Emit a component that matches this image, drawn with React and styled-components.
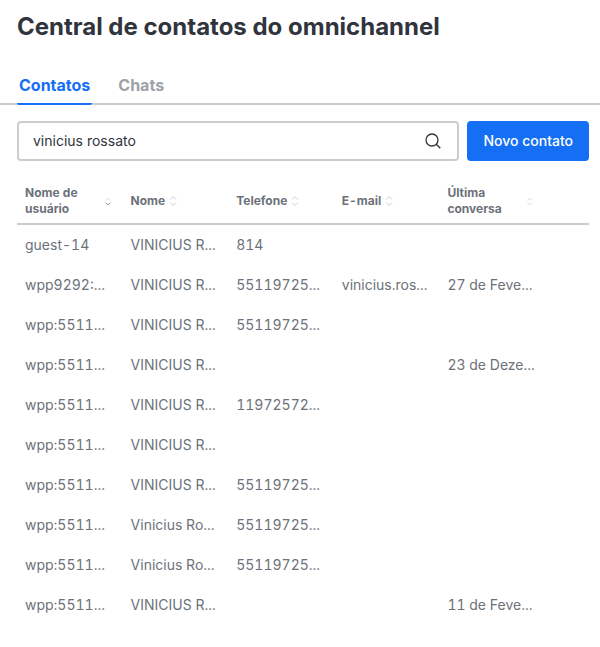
import React, { useState } from "react";
import styled, { createGlobalStyle } from "styled-components";

const columns = [
  { id: "username", label: "Nome de usuário", sorted: true, wide: true },
  { id: "name", label: "Nome" },
  { id: "phone", label: "Telefone" },
  { id: "email", label: "E-mail" },
  { id: "lastChat", label: "Última conversa", wide: true },
];

const contacts = [
  { username: "guest-14", name: "VINICIUS R...", phone: "814" },
  { username: "wpp9292:...", name: "VINICIUS R...", phone: "55119725...", email: "vinicius.ros...", lastChat: "27 de Feve..." },
  { username: "wpp:5511...", name: "VINICIUS R...", phone: "55119725..." },
  { username: "wpp:5511...", name: "VINICIUS R...", lastChat: "23 de Deze..." },
  { username: "wpp:5511...", name: "VINICIUS R...", phone: "11972572..." },
  { username: "wpp:5511...", name: "VINICIUS R..." },
  { username: "wpp:5511...", name: "VINICIUS R...", phone: "55119725..." },
  { username: "wpp:5511...", name: "Vinicius Ro...", phone: "55119725..." },
  { username: "wpp:5511...", name: "Vinicius Ro...", phone: "55119725..." },
  { username: "wpp:5511...", name: "VINICIUS R...", lastChat: "11 de Feve..." },
];

const SortIcon = ({ sorted, small }) => (
  <SortSvg viewBox="0 0 8 12" $small={small} aria-hidden="true">
    <path d="M1 4.5 L4 1.5 L7 4.5" stroke="#cbced1" />
    <path d="M1 7.5 L4 10.5 L7 7.5" stroke={sorted ? "#6c727a" : "#cbced1"} />
  </SortSvg>
);

const App = () => {
  const [search, setSearch] = useState("vinicius rossato");
  const [tab, setTab] = useState("contacts");

  return (
    <>
      <GlobalStyle />
      <Page>
        <Title>Central de contatos do omnichannel</Title>
        <Tabs role="tablist">
          <Tab role="tab" aria-selected={tab === "contacts"} $active={tab === "contacts"} onClick={() => setTab("contacts")}>
            Contatos
          </Tab>
          <Tab role="tab" aria-selected={tab === "chats"} $active={tab === "chats"} onClick={() => setTab("chats")}>
            Chats
          </Tab>
        </Tabs>
        <Content>
          <Toolbar>
            <SearchBox>
              <SearchInput
                type="text"
                aria-label="Buscar contatos"
                value={search}
                onChange={(e) => setSearch(e.target.value)}
              />
              <SearchIcon viewBox="0 0 20 20" aria-hidden="true">
                <circle cx="9" cy="9" r="6" />
                <path d="M13.3 13.3 L17.3 17.3" />
              </SearchIcon>
            </SearchBox>
            <NewButton type="button">Novo contato</NewButton>
          </Toolbar>
          <Table>
            <colgroup>
              {columns.map((c) => (
                <col key={c.id} />
              ))}
              <ActionCol />
            </colgroup>
            <thead>
              <tr>
                {columns.map((c) => (
                  <HeadCell key={c.id} scope="col">
                    <HeadContent>
                      <HeadLabel $wide={c.wide}>{c.label}</HeadLabel>
                      <SortIcon sorted={c.sorted} small={c.wide} />
                    </HeadContent>
                  </HeadCell>
                ))}
                <HeadCell as="td" />
              </tr>
            </thead>
            <tbody>
              {contacts.map((contact, index) => (
                <tr key={index}>
                  {columns.map((c) => (
                    <Cell key={c.id}>{contact[c.id]}</Cell>
                  ))}
                  <Cell />
                </tr>
              ))}
            </tbody>
          </Table>
        </Content>
      </Page>
    </>
  );
};

const GlobalStyle = createGlobalStyle`
  * {
    box-sizing: border-box;
  }

  body {
    margin: 0;
    background: #ffffff;
    color: #2f343d;
    font-family: Inter, "Liberation Sans", sans-serif;
  }

  button,
  input {
    font-family: inherit;
  }
`;

const Page = styled.main`
  padding-top: 11px;
`;

const Title = styled.h1`
  margin: 0;
  padding: 0 17px;
  font-size: 24px;
  font-weight: 700;
  line-height: 32px;
`;

const Tabs = styled.div`
  display: flex;
  gap: 24px;
  margin-top: 27px;
  padding: 0 17px;
  border-bottom: 2px solid #cbced1;
`;

const Tab = styled.button`
  height: 35px;
  margin-bottom: -2px;
  padding: 0 2px 4px;
  border: 0;
  border-bottom: 2px solid ${(props) => (props.$active ? "#156ff5" : "transparent")};
  border-radius: 2px;
  background: none;
  color: ${(props) => (props.$active ? "#156ff5" : "#9ea2a8")};
  font-size: 16px;
  font-weight: 700;
  line-height: 24px;
  cursor: pointer;
`;

const Content = styled.section`
  padding: 16px 11px 0 17px;
`;

const Toolbar = styled.div`
  display: flex;
  gap: 8px;
`;

const SearchBox = styled.div`
  display: flex;
  flex: 1;
  align-items: center;
  height: 40px;
  padding: 0 14px;
  border: 2px solid #cbced1;
  border-radius: 4px;
`;

const SearchInput = styled.input`
  flex: 1;
  min-width: 0;
  padding: 0;
  border: 0;
  outline: 0;
  color: #2f343d;
  font-size: 14px;
  line-height: 20px;
`;

const SearchIcon = styled.svg`
  width: 20px;
  height: 20px;
  fill: none;
  stroke: #2f343d;
  stroke-width: 1.3;
`;

const NewButton = styled.button`
  height: 40px;
  padding: 0 16px;
  border: 0;
  border-radius: 4px;
  background: #156ff5;
  color: #ffffff;
  font-size: 14px;
  font-weight: 500;
  line-height: 20px;
  cursor: pointer;
`;

const Table = styled.table`
  width: 100%;
  margin-top: 16px;
  border-spacing: 0;
  table-layout: fixed;
  font-variant-numeric: tabular-nums;
`;

const ActionCol = styled.col`
  width: 44px;
`;

const HeadCell = styled.th`
  height: 48px;
  padding: 2px 8px 0;
  border-bottom: 2px solid #cbced1;
  text-align: left;
`;

const HeadContent = styled.div`
  display: flex;
  align-items: center;
  gap: 4px;
`;

const HeadLabel = styled.span`
  flex: ${(props) => (props.$wide ? "1" : "none")};
  color: #6c727a;
  font-size: 12px;
  font-weight: 700;
  line-height: 16px;
`;

const SortSvg = styled.svg`
  flex: none;
  width: ${(props) => (props.$small ? "6px" : "8px")};
  height: ${(props) => (props.$small ? "9px" : "12px")};
  margin-right: ${(props) => (props.$small ? "4px" : "0")};
  fill: none;
`;

const Cell = styled.td`
  height: 40px;
  padding: 0 8px;
  overflow: hidden;
  color: #6c727a;
  font-size: 14px;
  line-height: 20px;
  white-space: nowrap;
`;

export default App;
